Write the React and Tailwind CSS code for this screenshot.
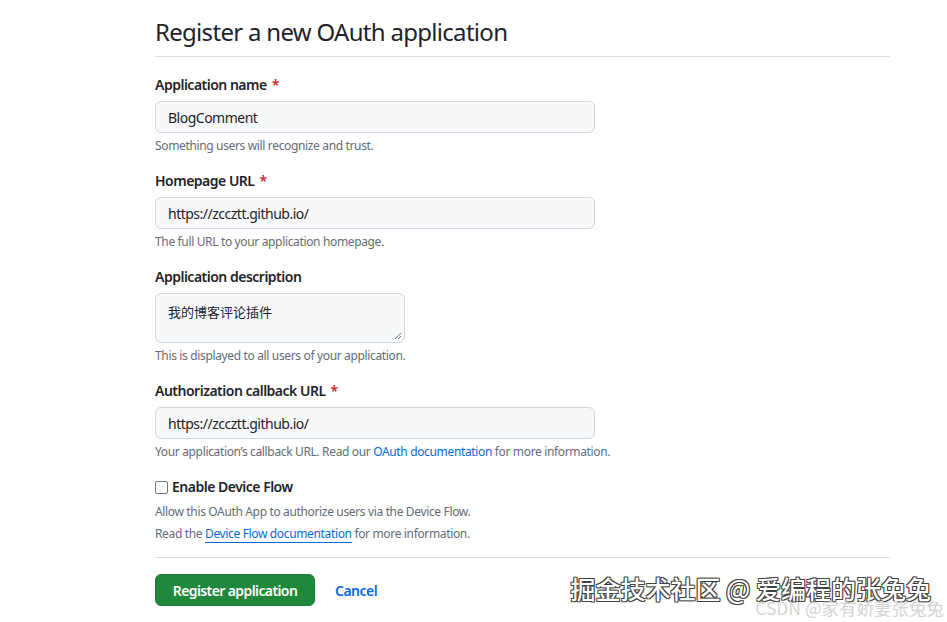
import React from "react";

const font = { fontFamily: '"Noto Sans", "Noto Sans CJK SC", sans-serif' };

function Label({ children, required }) {
  return (
    <div className="text-[14px] font-semibold leading-[20px] tracking-[-0.5px] text-[#1f2328] mb-[6px]">
      {children}
      {required && <span className="text-[#d1242f] ml-[5px]">*</span>}
    </div>
  );
}

function Note({ children }) {
  return (
    <p className="text-[12px] leading-[18px] tracking-[-0.35px] text-[#636c76] mt-[4px]">{children}</p>
  );
}

function TextInput({ value }) {
  return (
    <div className="w-[440px] h-[32px] rounded-[6px] border border-[#d0d7de] bg-[#f6f8fa] px-[12px] flex items-center text-[14px] tracking-[-0.5px] text-[#1f2328]">
      {value}
    </div>
  );
}

export default function App() {
  return (
    <div className="min-h-[622px] w-[947px] bg-white relative overflow-hidden" style={font}>
      <div className="ml-[155px] w-[735px] pt-[14px]">
        <h1 className="text-[24px] leading-[36px] font-normal tracking-[-0.7px] text-[#1f2328] pb-[6px] border-b border-[#d8dee4]">
          Register a new OAuth application
        </h1>

        <div className="mt-[18px]">
          <Label required>Application name</Label>
          <TextInput value="BlogComment" />
          <Note>Something users will recognize and trust.</Note>
        </div>

        <div className="mt-[16px]">
          <Label required>Homepage URL</Label>
          <TextInput value="https://zccztt.github.io/" />
          <Note>The full URL to your application homepage.</Note>
        </div>

        <div className="mt-[16px]">
          <Label>Application description</Label>
          <div className="relative w-[250px] h-[50px] rounded-[6px] border border-[#d0d7de] bg-[#f6f8fa] px-[12px] pt-[8px] text-[13px] leading-[20px] text-[#1f2328]">
            我的博客评论插件
            <svg className="absolute right-[2px] bottom-[2px]" width="9" height="9" viewBox="0 0 9 9">
              <path d="M8 2 L2 8 M8 5 L5 8" stroke="#6e7781" strokeWidth="1" />
            </svg>
          </div>
          <Note>This is displayed to all users of your application.</Note>
        </div>

        <div className="mt-[16px]">
          <Label required>Authorization callback URL</Label>
          <TextInput value="https://zccztt.github.io/" />
          <Note>
            Your application’s callback URL. Read our{" "}
            <span className="text-[#0969da]">OAuth documentation</span> for more information.
          </Note>
        </div>

        <div className="mt-[16px]">
          <label className="flex items-center text-[14px] font-semibold leading-[20px] tracking-[-0.5px] text-[#1f2328]">
            <span className="w-[13px] h-[13px] border border-[#767676] rounded-[2px] bg-white mr-[4px] inline-block" />
            Enable Device Flow
          </label>
          <p className="text-[12px] leading-[18px] tracking-[-0.35px] text-[#636c76] mt-[6px]">
            Allow this OAuth App to authorize users via the Device Flow.
          </p>
          <p className="text-[12px] leading-[18px] tracking-[-0.35px] text-[#636c76] mt-[4px]">
            Read the{" "}
            <span className="text-[#0969da] border-b border-[#0969da]">Device Flow documentation</span>{" "}
            for more information.
          </p>
        </div>

        <div className="mt-[14px] border-t border-[#d8dee4] pt-[16px] flex items-center">
          <button className="w-[160px] h-[32px] rounded-[6px] bg-[#1f883d] border border-[#1a7f37] text-white text-[14px] font-semibold tracking-[-0.6px]">
            Register application
          </button>
          <span className="ml-[20px] text-[14px] font-semibold tracking-[-0.5px] text-[#0969da]">Cancel</span>
        </div>
      </div>

      {/* site watermarks */}
      <div
        className="absolute right-[16px] top-[572px] text-[25px] leading-[32px] text-white font-medium"
        style={{
          fontFamily: '"Noto Sans CJK SC", sans-serif',
          textShadow: "0 0 1px #333, 1px 1px 0 #444, -1px -1px 0 #444, 1px -1px 0 #444, -1px 1px 0 #444",
        }}
      >
        掘金技术社区 @ 爱编程的张兔兔
      </div>
      <div
        className="absolute right-[3px] top-[598px] text-[17.5px] leading-[20px] text-[#d4d4d4]"
        style={{ fontFamily: '"Noto Sans CJK SC", sans-serif' }}
      >
        CSDN @家有娇妻张兔兔
      </div>
    </div>
  );
}
